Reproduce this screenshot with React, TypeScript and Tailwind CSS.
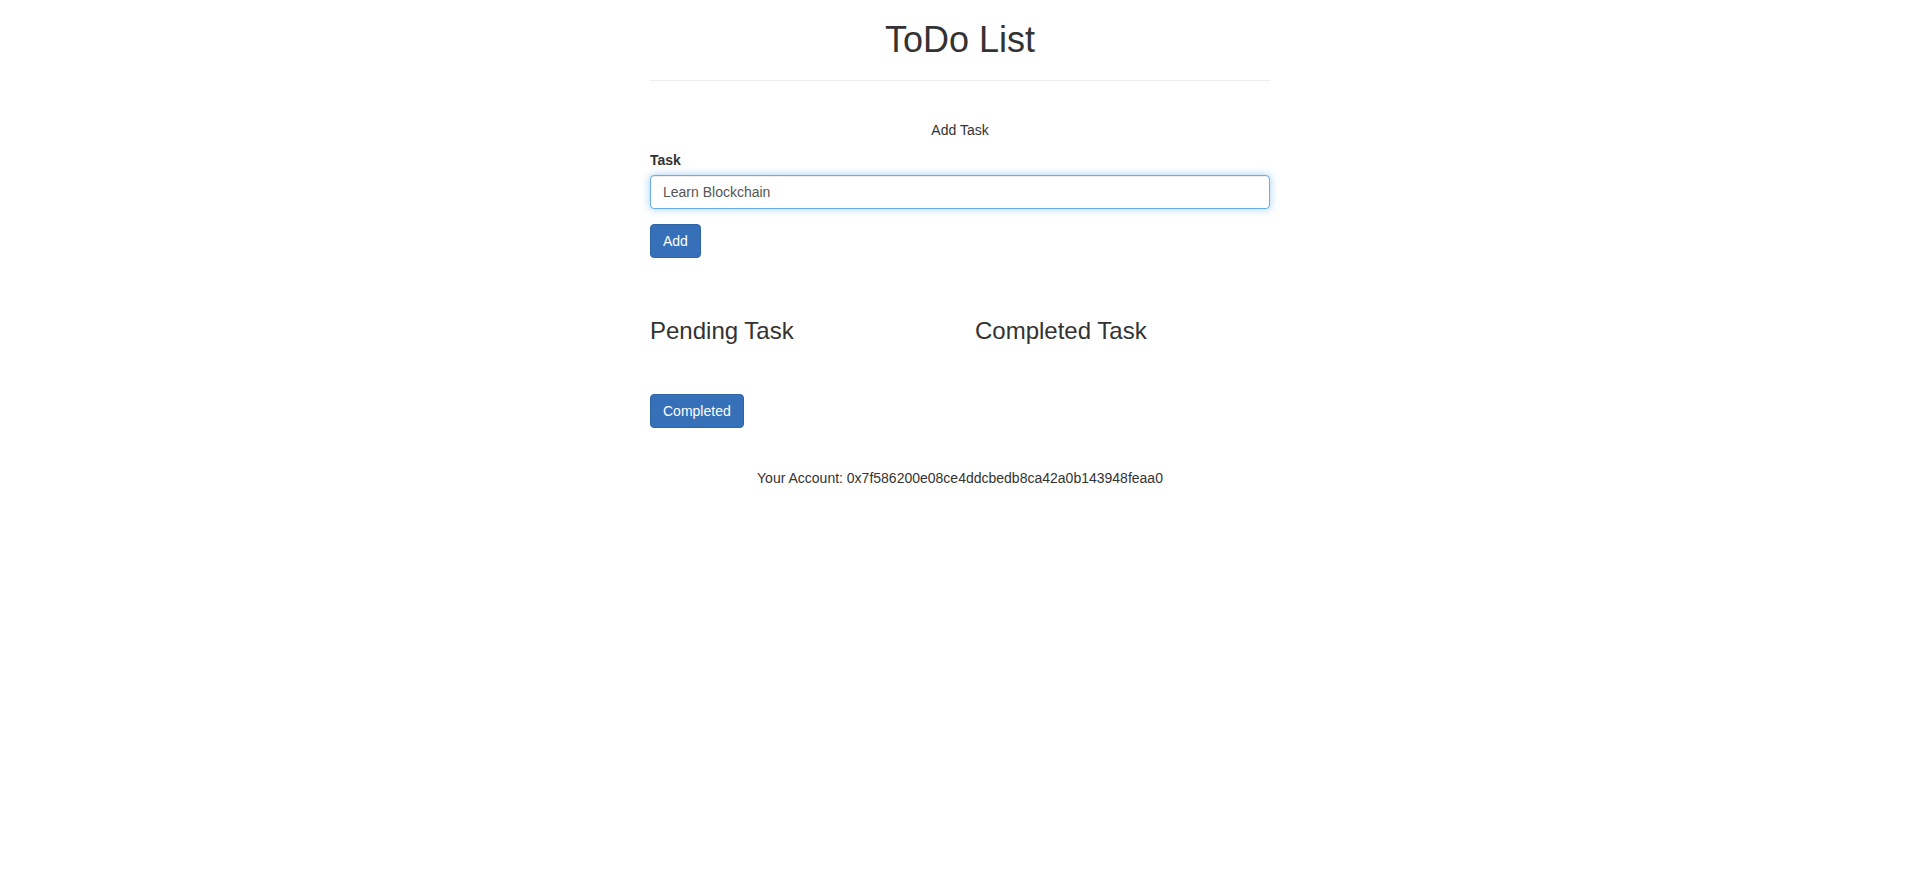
export default function App() {
  return (
    <div className="min-h-screen bg-white text-[#333] font-['Liberation_Sans',Arial,sans-serif] text-[14px] leading-[20px]">
      <div className="mx-auto w-[620px]">
        {/* Header */}
        <h1 className="mt-[20px] text-center text-[36px] leading-[39.6px] font-normal">ToDo List</h1>
        <hr className="mt-[20px] border-0 border-t border-[#eee]" />

        {/* Add task form */}
        <p className="mt-[39px] text-center">Add Task</p>
        <form className="mt-[10px]" onSubmit={(e) => e.preventDefault()}>
          <div className="mb-[15px]">
            <label className="mb-[5px] inline-block font-bold">Task</label>
            <input
              type="text"
              defaultValue="Learn Blockchain"
              className="block h-[34px] w-full rounded-[4px] border border-[#66afe9] bg-white px-[12px] py-[6px] text-[14px] text-[#555] outline-none shadow-[inset_0_1px_1px_rgba(0,0,0,0.075),0_0_8px_rgba(102,175,233,0.6)]"
            />
          </div>
          <button
            type="submit"
            className="h-[34px] rounded-[4px] border border-[#2e65a4] bg-[#3570b8] px-[12px] text-[14px] leading-[20px] text-white"
          >
            Add
          </button>
        </form>

        {/* Task lists */}
        <div className="mt-[60px] flex">
          <div className="w-1/2 pr-[15px]">
            <h3 className="text-[24px] leading-[26.4px] font-normal">Pending Task</h3>
          </div>
          <div className="w-1/2 pl-[15px]">
            <h3 className="text-[24px] leading-[26.4px] font-normal">Completed Task</h3>
          </div>
        </div>

        <button className="mt-[50px] h-[34px] rounded-[4px] border border-[#2e65a4] bg-[#3570b8] px-[12px] text-[14px] leading-[20px] text-white">
          Completed
        </button>

        <p className="mt-[40px] text-center">Your Account: 0x7f586200e08ce4ddcbedb8ca42a0b143948feaa0</p>
      </div>
    </div>
  );
}
